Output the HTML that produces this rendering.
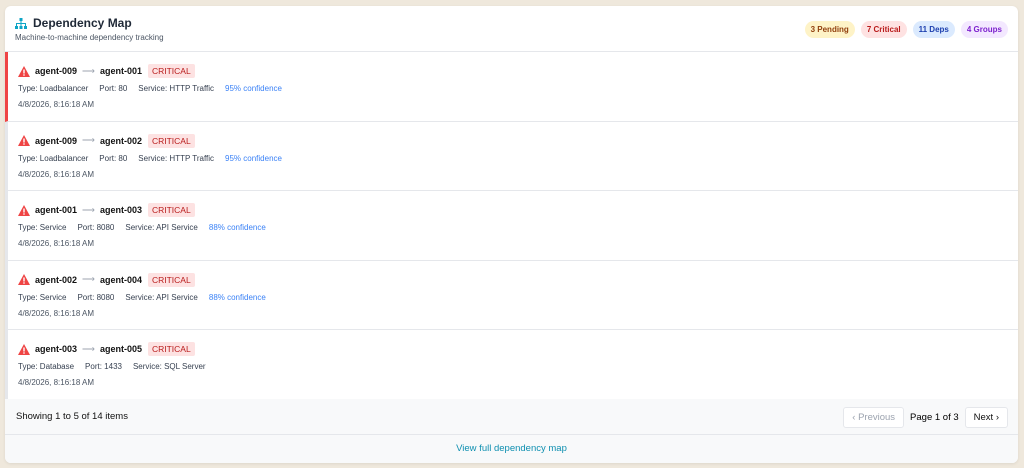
<!DOCTYPE html>
<html><head><style>
*{box-sizing:border-box;margin:0;padding:0}
body{width:1024px;height:468px;background:#efe8dc;font-family:"Liberation Sans",sans-serif;position:relative;overflow:hidden}
.card{position:absolute;left:5px;top:6px;width:1013px;height:457px;background:#fff;border-radius:6px;overflow:hidden;box-shadow:0 1px 3px rgba(0,0,0,.08)}
.hdr{height:46px;border-bottom:1px solid #e5e7eb;position:relative}
.title{position:absolute;left:10px;top:10px;font-size:12px;font-weight:bold;color:#1f2937;display:flex;align-items:center;gap:6px}
.sub{position:absolute;left:10px;top:27px;font-size:8px;color:#4b5563}
.badges{position:absolute;right:10px;top:15px;display:flex;gap:6px}
.b{font-size:8px;font-weight:bold;padding:4px 6px;border-radius:9px}
.row{height:69.5px;border-bottom:1px solid #e5e7eb;border-left:3px solid #e5e7eb;position:relative}
.row.first{border-left-color:#ef4444}
.l1{position:absolute;left:10px;top:12px;display:flex;align-items:center;font-size:9px;font-weight:bold;color:#111}
.arr{color:#9ca3af;font-weight:normal;margin:0 5px}
.crit{background:#fde2e2;color:#b91c1c;font-weight:normal;padding:2px 4px;border-radius:2px;margin-left:6px;font-size:8.5px}
.l2{position:absolute;left:10px;top:32px;font-size:8px;color:#374151}
.l2 span{margin-right:11px}
.l2 .c{color:#3b82f6}
.l3{position:absolute;left:10px;top:48px;font-size:8px;color:#4b5563}
.foot{position:absolute;left:0;top:393px;width:100%;height:36px;background:#f8f9fa;border-bottom:1px solid #e5e7eb}
.foot .s{position:absolute;left:11px;top:12px;font-size:9.5px;color:#111}
.pg{position:absolute;right:10px;top:8px;display:flex;align-items:center;gap:6px;font-size:9.5px}
.btn{border:1px solid #e5e7eb;background:#fff;border-radius:3px;padding:4px 8px;color:#111}
.btn.d{color:#9ca3af}
.link{position:absolute;left:0;top:429px;width:100%;height:28px;background:#f8f9fa;text-align:center;font-size:9.5px;color:#0e8fb0;line-height:28px}
</style></head><body>
<div class="card">
<div class="hdr">
<div class="title"><svg width="12" height="11" viewBox="0 0 12 11"><g fill="#0ea5c6"><rect x="4.5" y="0" width="3" height="3"/><rect x="0" y="8" width="3" height="3"/><rect x="4.5" y="8" width="3" height="3"/><rect x="9" y="8" width="3" height="3"/><rect x="5.5" y="3" width="1" height="3"/><rect x="1" y="5" width="10" height="1"/><rect x="1" y="5" width="1" height="3"/><rect x="10" y="5" width="1" height="3"/><rect x="5.5" y="5" width="1" height="3"/></g></svg>Dependency Map</div>
<div class="sub">Machine-to-machine dependency tracking</div>
<div class="badges">
<span class="b" style="background:#fef3c7;color:#92400e">3 Pending</span>
<span class="b" style="background:#fee2e2;color:#b91c1c">7 Critical</span>
<span class="b" style="background:#dbeafe;color:#1e40af">11 Deps</span>
<span class="b" style="background:#f3e8ff;color:#7e22ce">4 Groups</span>
</div></div>

<div class="row first"><div class="l1"><svg width="12" height="11" viewBox="0 0 12 11" style="margin-right:5px"><path d="M6 0L12 11H0Z" fill="#ef4444"/><rect x="5.3" y="3.5" width="1.4" height="4" fill="#fff"/><rect x="5.3" y="8.3" width="1.4" height="1.4" fill="#fff"/></svg>agent-009<span class="arr">⟶</span>agent-001<span class="crit">CRITICAL</span></div><div class="l2"><span>Type: Loadbalancer</span><span>Port: 80</span><span>Service: HTTP Traffic</span><span class="c">95% confidence</span></div><div class="l3">4/8/2026, 8:16:18 AM</div></div>

<div class="row"><div class="l1"><svg width="12" height="11" viewBox="0 0 12 11" style="margin-right:5px"><path d="M6 0L12 11H0Z" fill="#ef4444"/><rect x="5.3" y="3.5" width="1.4" height="4" fill="#fff"/><rect x="5.3" y="8.3" width="1.4" height="1.4" fill="#fff"/></svg>agent-009<span class="arr">⟶</span>agent-002<span class="crit">CRITICAL</span></div><div class="l2"><span>Type: Loadbalancer</span><span>Port: 80</span><span>Service: HTTP Traffic</span><span class="c">95% confidence</span></div><div class="l3">4/8/2026, 8:16:18 AM</div></div>

<div class="row"><div class="l1"><svg width="12" height="11" viewBox="0 0 12 11" style="margin-right:5px"><path d="M6 0L12 11H0Z" fill="#ef4444"/><rect x="5.3" y="3.5" width="1.4" height="4" fill="#fff"/><rect x="5.3" y="8.3" width="1.4" height="1.4" fill="#fff"/></svg>agent-001<span class="arr">⟶</span>agent-003<span class="crit">CRITICAL</span></div><div class="l2"><span>Type: Service</span><span>Port: 8080</span><span>Service: API Service</span><span class="c">88% confidence</span></div><div class="l3">4/8/2026, 8:16:18 AM</div></div>

<div class="row"><div class="l1"><svg width="12" height="11" viewBox="0 0 12 11" style="margin-right:5px"><path d="M6 0L12 11H0Z" fill="#ef4444"/><rect x="5.3" y="3.5" width="1.4" height="4" fill="#fff"/><rect x="5.3" y="8.3" width="1.4" height="1.4" fill="#fff"/></svg>agent-002<span class="arr">⟶</span>agent-004<span class="crit">CRITICAL</span></div><div class="l2"><span>Type: Service</span><span>Port: 8080</span><span>Service: API Service</span><span class="c">88% confidence</span></div><div class="l3">4/8/2026, 8:16:18 AM</div></div>

<div class="row"><div class="l1"><svg width="12" height="11" viewBox="0 0 12 11" style="margin-right:5px"><path d="M6 0L12 11H0Z" fill="#ef4444"/><rect x="5.3" y="3.5" width="1.4" height="4" fill="#fff"/><rect x="5.3" y="8.3" width="1.4" height="1.4" fill="#fff"/></svg>agent-003<span class="arr">⟶</span>agent-005<span class="crit">CRITICAL</span></div><div class="l2"><span>Type: Database</span><span>Port: 1433</span><span>Service: SQL Server</span></div><div class="l3">4/8/2026, 8:16:18 AM</div></div>

<div class="foot"><div class="s">Showing 1 to 5 of 14 items</div>
<div class="pg"><span class="btn d">‹ Previous</span><span>Page 1 of 3</span><span class="btn">Next ›</span></div></div>
<div class="link">View full dependency map</div>
</div>
</body></html>
